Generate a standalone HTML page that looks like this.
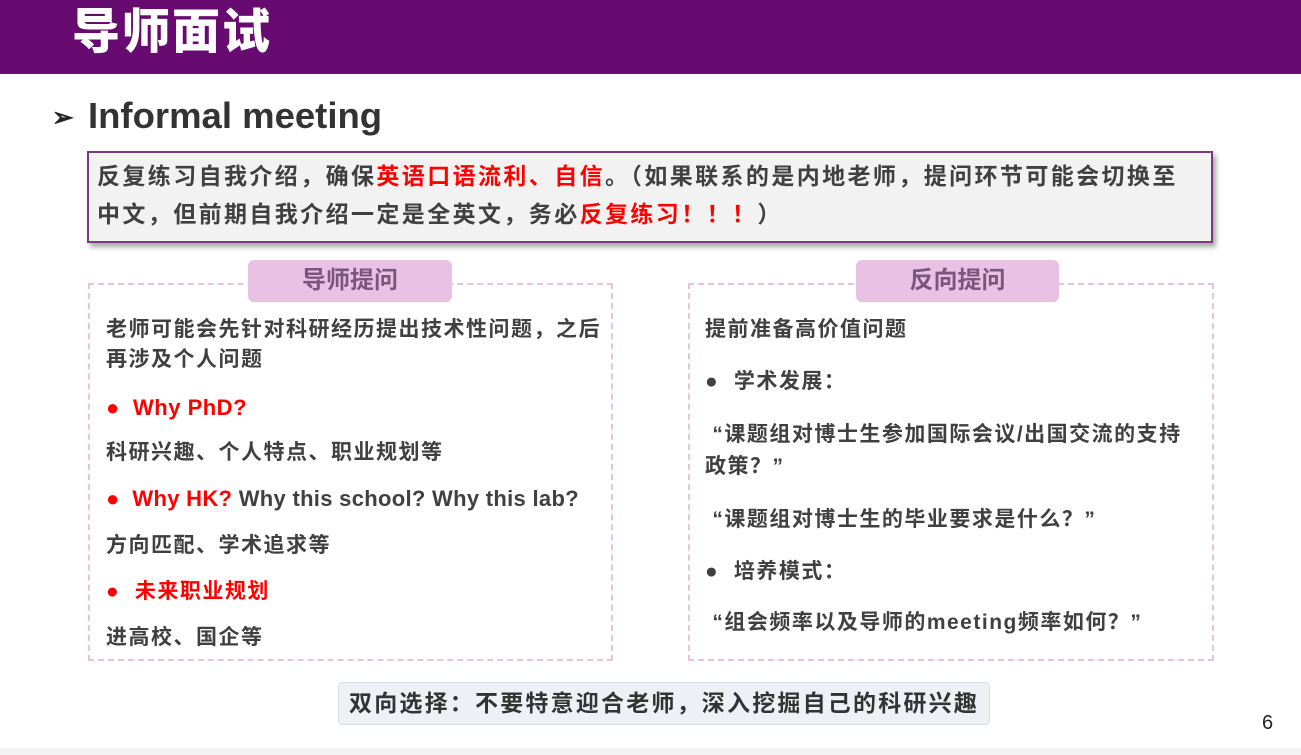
<!DOCTYPE html>
<html><head><meta charset="utf-8"><style>
*{margin:0;padding:0;box-sizing:border-box}
body{width:1301px;height:755px;background:#fff;position:relative;overflow:hidden;font-family:"Liberation Sans","Noto Sans CJK SC",sans-serif;font-weight:bold;color:#404040}
.a{position:absolute;white-space:nowrap}
.r{color:#f00}
.hdr{position:absolute;left:0;top:0;width:1301px;height:74px;background:#680b70}
.p{position:absolute;border:2px dashed #e6c4df;}
.lbl{position:absolute;background:#e8c1e5;border-radius:6px;color:#7a5580;font-size:24px;text-align:center;line-height:42px}
.t{font-size:21px;line-height:30px;letter-spacing:1.5px}
</style></head><body>
<div class="hdr"></div>
<div class="a" style="left:72px;top:2px;font-size:48px;letter-spacing:2px;color:#fff;line-height:62px;font-weight:900">导师面试</div>
<div class="a" style="left:52px;top:100px;font-size:26px;color:#222;line-height:34px">➢</div>
<div class="a" style="left:88px;top:95px;font-size:36.5px;color:#333;line-height:42px">Informal meeting</div>
<div class="a" style="left:87px;top:151px;width:1126px;height:92px;border:2px solid #7a3a80;background:#f2f2f2;box-shadow:3px 4px 5px rgba(0,0,0,.35)"></div>
<div class="a" style="left:97px;top:157px;font-size:23px;letter-spacing:2.4px;line-height:38px">反复练习自我介绍，确保<span class="r">英语口语流利、自信</span>。（如果联系的是内地老师，提问环节可能会切换至<br>中文，但前期自我介绍一定是全英文，务必<span class="r">反复练习！！！</span>）</div>

<div class="p" style="left:88px;top:283px;width:525px;height:378px"></div>
<div class="lbl" style="left:248px;top:260px;width:204px;height:42px">导师提问</div>
<div class="p" style="left:688px;top:283px;width:526px;height:378px"></div>
<div class="lbl" style="left:856px;top:260px;width:203px;height:42px">反向提问</div>

<div class="a t" style="left:106px;top:315px">老师可能会先针对科研经历提出技术性问题，之后<br>再涉及个人问题</div>
<div class="a t r" style="left:106px;top:393px;font-size:22px;letter-spacing:0.5px">●&nbsp;&nbsp;Why PhD?</div>
<div class="a t" style="left:106px;top:438px">科研兴趣、个人特点、职业规划等</div>
<div class="a t" style="left:106px;top:484px;font-size:22px;letter-spacing:0.3px"><span class="r">●&nbsp;&nbsp;Why HK?</span> Why this school? Why this lab?</div>
<div class="a t" style="left:106px;top:531px">方向匹配、学术追求等</div>
<div class="a t r" style="left:106px;top:577px">●&nbsp;&nbsp;未来职业规划</div>
<div class="a t" style="left:106px;top:623px">进高校、国企等</div>

<div class="a t" style="left:705px;top:315px">提前准备高价值问题</div>
<div class="a t" style="left:705px;top:367px">●&nbsp;&nbsp;学术发展：</div>
<div class="a t" style="left:705px;top:419px;line-height:32px">&nbsp;“课题组对博士生参加国际会议/出国交流的支持<br>政策？”</div>
<div class="a t" style="left:705px;top:505px">&nbsp;“课题组对博士生的毕业要求是什么？”</div>
<div class="a t" style="left:705px;top:557px">●&nbsp;&nbsp;培养模式：</div>
<div class="a t" style="left:705px;top:608px">&nbsp;“组会频率以及导师的meeting频率如何？”</div>

<div class="a" style="left:338px;top:682px;width:652px;height:43px;background:#eef0f5;border:1px solid #d8dbe2;border-radius:5px;font-size:23px;letter-spacing:2.2px;line-height:41px;padding-left:10px;color:#333">双向选择：不要特意迎合老师，深入挖掘自己的科研兴趣</div>
<div class="a" style="left:1262px;top:712px;font-size:20px;font-weight:normal;color:#222">6</div>
<div class="a" style="left:0;top:748px;width:1301px;height:7px;background:#f3f3f3"></div>
</body></html>
